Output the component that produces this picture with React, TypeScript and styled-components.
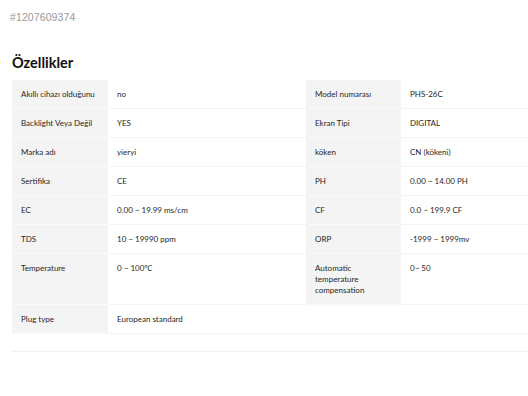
import React from "react";
import styled, { createGlobalStyle } from "styled-components";

const Global = createGlobalStyle`
  html, body { margin: 0; padding: 0; background: #fff; overflow: hidden; }
  body { width: 528px; height: 396px; }
`;

const Page = styled.div`
  padding: 11px 0 0 12px;
  font-family: Lato, "Noto Sans", sans-serif;
  color: #222;
`;

const AdId = styled.div`
  font-family: "Liberation Sans", Arial, sans-serif;
  font-size: 10.5px;
  line-height: 12px;
  color: #999;
  margin-left: -2px;
  letter-spacing: 0.1px;
`;

const Heading = styled.h2`
  margin: 31px 0 0 0;
  font-family: Lato, sans-serif;
  font-weight: 700;
  font-size: 14.5px;
  line-height: 18px;
  color: #111;
`;

const Grid = styled.div`
  margin-top: 8px;
  display: grid;
  grid-template-columns: 96px 198px 95px 140px;
  width: 529px;
  border-bottom: 1px solid #f2f2f2;
  padding-bottom: 17px;
`;

const Cell = styled.div<{ $label?: boolean }>`
  background: ${(p) => (p.$label ? "#f4f4f4" : "#fff")};
  border-bottom: 1px solid ${(p) => (p.$label ? "#fafafa" : "#f4f4f4")};
  padding: 9px 8px 8px 9px;
  font-size: 8px;
  line-height: 11px;
  color: #262626;
  min-height: 11px;
`;

const rows: [string, string, string, string][] = [
  ["Akıllı cihazı olduğunu", "no", "Model numarası", "PHS-26C"],
  ["Backlight Veya Değil", "YES", "Ekran Tipi", "DIGITAL"],
  ["Marka adı", "yieryi", "köken", "CN (kökeni)"],
  ["Sertifika", "CE", "PH", "0.00 ~ 14.00 PH"],
  ["EC", "0.00 ~ 19.99 ms/cm", "CF", "0.0 ~ 199.9 CF"],
  ["TDS", "10 ~ 19990 ppm", "ORP", "-1999 ~ 1999mv"],
  ["Temperature", "0 ~ 100℃", "Automatic temperature compensation", "0~ 50"],
  ["Plug type", "European standard", "", ""],
];

export default function App() {
  return (
    <>
      <Global />
      <Page>
        <AdId>#1207609374</AdId>
        <Heading>Özellikler</Heading>
        <Grid>
          {rows.map((r, i) => (
            <React.Fragment key={i}>
              <Cell $label>{r[0]}</Cell>
              <Cell>{r[1]}</Cell>
              <Cell $label={r[2] !== ""}>{r[2]}</Cell>
              <Cell>{r[3]}</Cell>
            </React.Fragment>
          ))}
        </Grid>
      </Page>
    </>
  );
}
